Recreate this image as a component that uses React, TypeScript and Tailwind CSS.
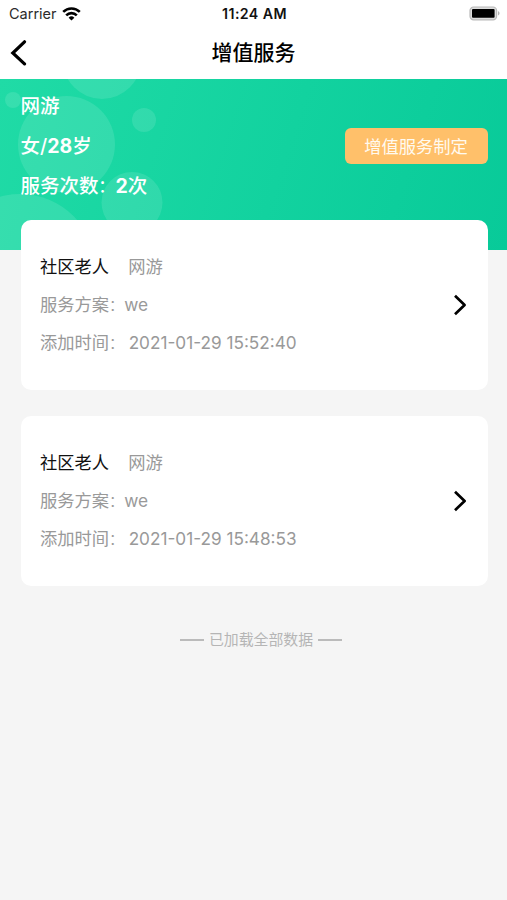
type ServiceRecord = {
  id: number
  role: string
  name: string
  plan: string
  createdAt: string
}

const RECORDS: ServiceRecord[] = [
  { id: 1, role: "社区老人", name: "网游", plan: "we", createdAt: "2021-01-29 15:52:40" },
  { id: 2, role: "社区老人", name: "网游", plan: "we", createdAt: "2021-01-29 15:48:53" },
]

function StatusBar() {
  return (
    <div className="grid grid-cols-3 items-center h-[27px] pl-[9px] pr-[7px]">
      <div className="flex items-center gap-[5px] text-[#2b2b2b]">
        <span className="text-[14.5px]">Carrier</span>
        <svg className="w-[19px] h-[14px]" viewBox="0 0 19 14" fill="none" stroke="#000" strokeWidth="2.6">
          <path d="M1.2 4.9a11.8 11.8 0 0 1 16.6 0" />
          <path d="M4.2 8.3a7.5 7.5 0 0 1 10.6 0" />
          <path d="M9.5 13.6 6.6 10.7a4.2 4.2 0 0 1 5.8 0z" fill="#000" stroke="none" />
        </svg>
      </div>
      <span className="text-center text-[14.2px] tracking-[0.4px] font-semibold text-[#111] whitespace-nowrap">11:24 AM</span>
      <svg className="justify-self-end w-[31px] h-[15px]" viewBox="0 0 31 15">
        <rect x="1" y="1" width="26.6" height="12.8" rx="3.6" fill="#ddd" stroke="#b9b9b9" strokeWidth="1.2" />
        <rect x="3" y="3" width="22.6" height="8.8" rx="1" fill="#000" />
        <path d="M29 5.2c2 .7 2 3.5 0 4.2z" fill="#b5b5b5" />
      </svg>
    </div>
  )
}

function NavBar() {
  return (
    <div className="grid grid-cols-[60px_1fr_60px] items-center h-[52px]">
      <svg className="ml-[10px] w-[18px] h-[26px]" viewBox="0 0 18 26" fill="none" stroke="#000" strokeWidth="3.2" strokeLinecap="round">
        <path d="M14.5 1.8 2.8 13l11.7 10.9" />
      </svg>
      <h1 className="text-center text-[21px] leading-[30px] font-medium text-black">增值服务</h1>
    </div>
  )
}

function Banner() {
  return (
    <div className="relative h-[171px] overflow-hidden bg-[linear-gradient(108deg,#20dba6_0%,#12d29f_55%,#08ca99_100%)] text-white">
      <svg className="absolute inset-0 w-[507px] h-[171px]" viewBox="0 0 507 171" fill="#fff" fillOpacity="0.11">
        <circle cx="102" cy="-19.5" r="39.4" />
        <circle cx="13" cy="21" r="8" />
        <circle cx="66.5" cy="65.5" r="48.5" />
        <circle cx="144" cy="41" r="12" />
        <circle cx="132" cy="123.5" r="30.5" />
        <circle cx="20" cy="191" r="76" />
      </svg>
      <div className="relative flex items-start justify-between pl-[20.5px] pr-[19px]">
        <div className="pt-[7px] text-[19.5px] leading-[40px] font-medium">
          <p>网游</p>
          <p>女/<b className="font-bold">28</b>岁</p>
          <div className="flex">
            <span>服务次数</span>
            <span className="w-[17px] text-[16px]">：</span>
            <span><b className="font-bold">2</b>次</span>
          </div>
        </div>
        <button className="mt-[49px] w-[143px] h-[36px] rounded-[6px] bg-[#ffc06a] pr-px text-[17.3px] leading-[38px] text-[#fffaf0]">增值服务制定</button>
      </div>
    </div>
  )
}

function RecordCard({ record }: { record: ServiceRecord }) {
  return (
    <div className="flex items-center justify-between h-[170px] pl-[19.5px] pr-[20.5px] rounded-[10px] bg-white">
      <div className="text-[17.3px] leading-[38.5px] text-[#999] whitespace-nowrap">
        <div className="flex gap-[19px] pt-px -mb-px">
          <span className="text-[#111]">{record.role}</span>
          <span>{record.name}</span>
        </div>
        <div className="flex">
          <span>服务方案</span>
          <span className="w-[15px] text-[14px]">：</span>
          <span>{record.plan}</span>
        </div>
        <div className="flex">
          <span>添加时间</span>
          <span className="w-[19.5px] text-[14px]">：</span>
          <span className="text-[17.2px]">{record.createdAt}</span>
        </div>
      </div>
      <svg className="w-[14px] h-[22px]" viewBox="0 0 14 22" fill="none" stroke="#000" strokeWidth="2.7" strokeLinejoin="round">
        <path d="m2 1.8 9.6 9.2L2 20.2" />
      </svg>
    </div>
  )
}

export default function App() {
  return (
    <div lang="zh-CN" className="min-h-[900px] bg-[#f5f5f5] font-[Inter,'Noto_Sans_CJK_SC',sans-serif]">
      <header className="bg-white">
        <StatusBar />
        <NavBar />
      </header>
      <Banner />
      <div className="relative -mt-[30px] flex flex-col gap-[26px] pl-[20.5px] pr-[19.5px]">
        {RECORDS.map((record) => (
          <RecordCard key={record.id} record={record} />
        ))}
      </div>
      <div className="mt-[42px] ml-[15px] flex items-center justify-center gap-[5px] text-[14.9px] leading-6 text-[#b5b5b5]">
        <span className="w-6 h-[1.5px] bg-[#bbb]" />
        <span>已加载全部数据</span>
        <span className="w-6 h-[1.5px] bg-[#bbb]" />
      </div>
    </div>
  )
}
